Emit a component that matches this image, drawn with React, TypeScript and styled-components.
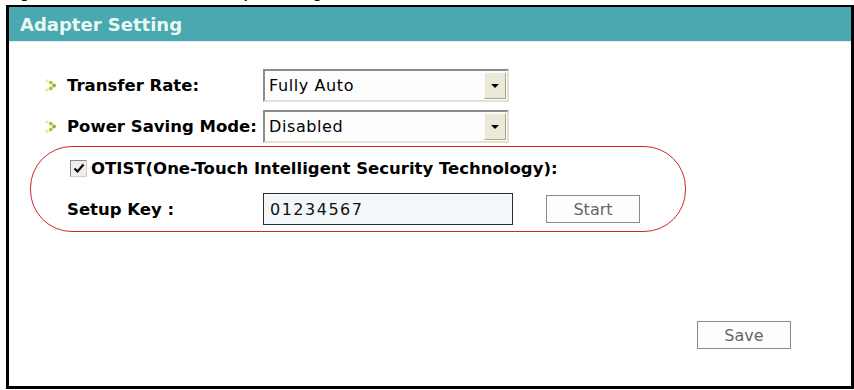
import React from "react";
import styled, { createGlobalStyle } from "styled-components";

const Global = createGlobalStyle`
  html, body { margin: 0; padding: 0; background: #ffffff; }
  body { width: 854px; height: 390px; overflow: hidden; font-family: "DejaVu Sans", Verdana, sans-serif; }
`;

const Page = styled.div`
  width: 854px;
  height: 390px;
  display: flex;
  flex-direction: column;
`;

const Caption = styled.div`
  height: 5px;
  overflow: hidden;
  font-family: "Liberation Sans", Arial, sans-serif;
  font-weight: bold;
  font-size: 14px;
  line-height: 16px;
  color: #000;
  white-space: pre;
`;

const CaptionText = styled.div`
  margin-top: -15px;
`;

const Frame = styled.div`
  margin-left: 6px;
  width: 848px;
  height: 384px;
  box-sizing: border-box;
  border: 3px solid #000;
  border-top-width: 2px;
  display: flex;
  flex-direction: column;
  background: #fff;
`;

const Header = styled.div`
  height: 34px;
  background: #49a8b0;
  border-bottom: 1px solid #dfe8fb;
  display: flex;
  align-items: center;
  padding-left: 11px;
  font-family: "DejaVu Sans", Verdana, sans-serif;
  font-weight: bold;
  font-size: 18px;
  color: #eaf8f2;
`;

const Body = styled.div`
  flex: 1;
  display: flex;
  flex-direction: column;
  padding-top: 27px;
`;

const FieldRow = styled.div`
  display: flex;
  align-items: center;
  height: 33px;
  padding-left: 36px;
  margin-bottom: 8px;
`;

const Bullet = styled.span`
  width: 22px;
  display: inline-flex;
  align-items: center;
`;

const Label = styled.span<{ $w?: number }>`
  width: ${(p) => p.$w ?? 196}px;
  flex: none;
  font-family: "DejaVu Sans", Verdana, sans-serif;
  font-weight: bold;
  font-size: 16.5px;
  color: #000;
  white-space: nowrap;
`;

const Select = styled.div`
  width: 246px;
  height: 33px;
  box-sizing: border-box;
  border-top: 2px solid #8c8c8c;
  border-left: 2px solid #8c8c8c;
  border-bottom: 2px solid #e4e1d4;
  border-right: 2px solid #e4e1d4;
  background: #fdfdfd;
  display: flex;
  align-items: center;
  justify-content: space-between;
`;

const SelectValue = styled.span`
  padding-left: 4px;
  font-family: "DejaVu Sans", Verdana, sans-serif;
  font-size: 16px;
  letter-spacing: 0.6px;
  color: #000;
`;

const DropButton = styled.span`
  width: 22px;
  height: 27px;
  box-sizing: border-box;
  background: #ece9d8;
  border-top: 1px solid #fbfaf5;
  border-left: 1px solid #fbfaf5;
  border-bottom: 1px solid #a9a690;
  border-right: 1px solid #a9a690;
  display: flex;
  align-items: center;
  justify-content: center;
  margin-right: 1px;
`;

const Triangle = styled.span`
  width: 0;
  height: 0;
  border-left: 4px solid transparent;
  border-right: 4px solid transparent;
  border-top: 4px solid #000;
`;

const Oval = styled.div`
  margin-left: 21px;
  margin-top: -5px;
  width: 656px;
  height: 86px;
  box-sizing: border-box;
  border: 1px solid #d6232e;
  border-radius: 42px;
  padding-left: 36px;
  padding-top: 12px;
  display: flex;
  flex-direction: column;
`;

const CheckRow = styled.div`
  display: flex;
  align-items: center;
  padding-left: 3px;
  height: 18px;
  gap: 4px;
`;

const CheckBox = styled.span`
  width: 17px;
  height: 17px;
  box-sizing: border-box;
  border: 1px solid #8a8a8a;
  border-right-color: #d0d0d0;
  border-bottom-color: #d0d0d0;
  background: #eeeeee;
  display: inline-flex;
  align-items: center;
  justify-content: center;
`;

const KeyRow = styled.div`
  display: flex;
  align-items: center;
  margin-top: 16px;
  height: 32px;
`;

const KeyInput = styled.div`
  width: 250px;
  height: 32px;
  box-sizing: border-box;
  border: 1px solid #2b2b2b;
  background: #f3f7f9;
  display: flex;
  align-items: center;
  padding-left: 6px;
  font-family: "DejaVu Sans", Verdana, sans-serif;
  font-size: 16px;
  letter-spacing: 1.5px;
  color: #111;
`;

const GrayButton = styled.div<{ $ml?: number }>`
  width: 94px;
  height: 28px;
  box-sizing: border-box;
  margin-left: ${(p) => p.$ml ?? 0}px;
  border: 1px solid #8a8a8a;
  background: #fdfdfd;
  display: flex;
  align-items: center;
  justify-content: center;
  font-family: "DejaVu Sans", Verdana, sans-serif;
  font-size: 16px;
  color: #666;
`;

const Footer = styled.div`
  margin-top: auto;
  display: flex;
  justify-content: flex-end;
  padding-right: 60px;
  padding-bottom: 37px;
`;

const BulletIcon = () => (
  <svg width="12" height="13" viewBox="0 0 12 13">
    <circle cx="2" cy="1.8" r="1.6" fill="#e6ee9c" />
    <circle cx="5.8" cy="3.6" r="1.9" fill="#a4c63a" />
    <circle cx="9" cy="6.5" r="2" fill="#8cb830" />
    <circle cx="5.8" cy="9.4" r="1.9" fill="#a4c63a" />
    <circle cx="2" cy="11.2" r="1.6" fill="#e6ee9c" />
  </svg>
);

const CheckMark = () => (
  <svg width="12" height="11" viewBox="0 0 12 11">
    <path d="M1.5 5.5 L4.5 8.5 L10.5 1.5" stroke="#000" strokeWidth="2.2" fill="none" />
  </svg>
);

export default function App() {
  return (
    <Page>
      <Global />
      <Caption>
        <CaptionText>{"  Figure 45                                      Adapter Setting: OTIST"}</CaptionText>
      </Caption>
      <Frame>
        <Header>Adapter Setting</Header>
        <Body>
          <FieldRow>
            <Bullet>
              <BulletIcon />
            </Bullet>
            <Label>Transfer Rate:</Label>
            <Select>
              <SelectValue>Fully Auto</SelectValue>
              <DropButton>
                <Triangle />
              </DropButton>
            </Select>
          </FieldRow>
          <FieldRow>
            <Bullet>
              <BulletIcon />
            </Bullet>
            <Label>Power Saving Mode:</Label>
            <Select>
              <SelectValue>Disabled</SelectValue>
              <DropButton>
                <Triangle />
              </DropButton>
            </Select>
          </FieldRow>
          <Oval>
            <CheckRow>
              <CheckBox>
                <CheckMark />
              </CheckBox>
              <Label $w={480}>OTIST(One-Touch Intelligent Security Technology):</Label>
            </CheckRow>
            <KeyRow>
              <Label>Setup Key :</Label>
              <KeyInput>01234567</KeyInput>
              <GrayButton $ml={33}>Start</GrayButton>
            </KeyRow>
          </Oval>
          <Footer>
            <GrayButton>Save</GrayButton>
          </Footer>
        </Body>
      </Frame>
    </Page>
  );
}
